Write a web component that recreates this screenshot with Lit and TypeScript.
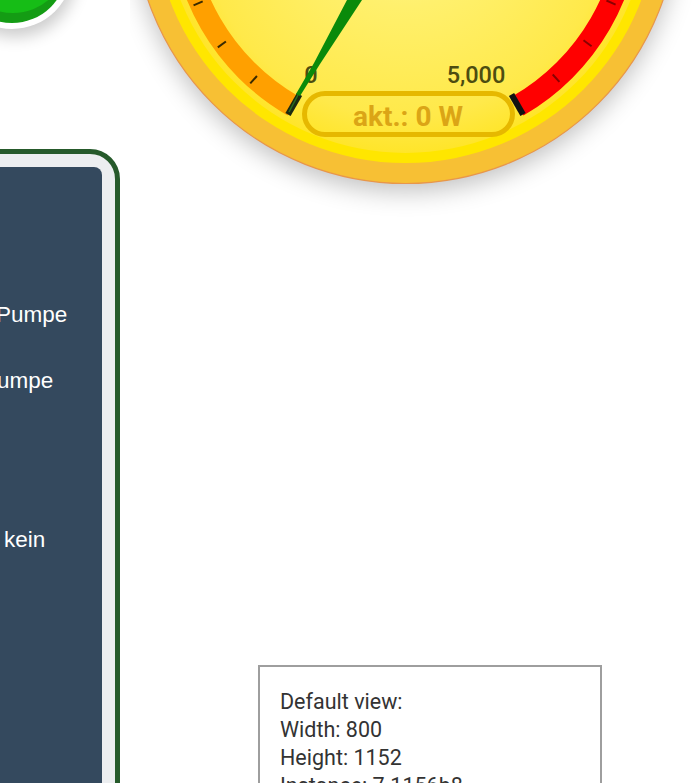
import { LitElement, html, css, svg } from "lit";
import { customElement } from "lit/decorators.js";

const CX = 405.5;
const CY = -89;

function polar(r: number, deg: number): [number, number] {
  // deg measured from straight down, positive to the left
  const a = (deg * Math.PI) / 180;
  return [CX - r * Math.sin(a), CY + r * Math.cos(a)];
}

function arc(r1: number, r2: number, from: number, to: number): string {
  const [ax, ay] = polar(r1, from);
  const [bx, by] = polar(r1, to);
  const [cx, cy] = polar(r2, to);
  const [dx, dy] = polar(r2, from);
  return `M${ax} ${ay}A${r1} ${r1} 0 0 1 ${bx} ${by}L${cx} ${cy}A${r2} ${r2} 0 0 0 ${dx} ${dy}Z`;
}

function tick(r1: number, r2: number, deg: number, w: number, color: string) {
  const [a, b] = polar(r1, deg);
  const [c, d] = polar(r2, deg);
  return svg`<line x1=${a} y1=${b} x2=${c} y2=${d} stroke=${color} stroke-width=${w} />`;
}

@customElement("app-root")
export class AppRoot extends LitElement {
  static styles = css`
    :host {
      display: flex;
      width: 696px;
      height: 783px;
      overflow: hidden;
      background: #fff;
      font-family: Roboto, "Liberation Sans", sans-serif;
    }
    .left {
      flex: 0 0 130px;
      display: flex;
      flex-direction: column;
    }
    .lamp {
      display: block;
      width: 130px;
      height: 149px;
      flex: none;
    }
    .frame {
      box-sizing: border-box;
      width: 240px;
      margin-left: -120px;
      height: 700px;
      flex: none;
      border: 5px solid #265a2b;
      border-radius: 30px;
      background: #eceef0;
      padding: 13px 13px 0 0;
    }
    .panel {
      height: 100%;
      box-sizing: border-box;
      background: #34495e;
      border-radius: 8px;
      color: #fff;
      font-family: "Liberation Sans", Arial, sans-serif;
      font-size: 22.5px;
      line-height: 26px;
      padding: 135px 0 0 114px;
      display: flex;
      flex-direction: column;
      align-items: flex-start;
    }
    .l1 { margin: 0 0 0 -3px; }
    .l2 { margin: 40px 0 0 -2px; }
    .l3 { margin: 133px 0 0 5px; }
    .right {
      flex: 1;
      display: flex;
      flex-direction: column;
      min-width: 0;
    }
    .gauge {
      display: block;
      width: 566px;
      height: 240px;
      flex: none;
    }
    .note {
      box-sizing: border-box;
      flex: none;
      margin: 425px 0 0 128px;
      width: 344px;
      height: 300px;
      border: 2px solid #9e9e9e;
      padding: 21px 20px 20px;
      color: #333;
      font-size: 21.5px;
      line-height: 28px;
    }
    svg text { font-family: Roboto, "Liberation Sans", sans-serif; }
  `;

  render() {
    return html`
      <div class="left">
        <svg class="lamp" viewBox="0 0 130 149">
          <defs>
            <filter id="ls" x="-40%" y="-40%" width="180%" height="180%">
              <feGaussianBlur stdDeviation="8" />
            </filter>
          </defs>
          <circle cx="15" cy="-24" r="61" fill="#000" opacity="0.2" filter="url(#ls)" />
          <circle cx="12" cy="-32" r="61" fill="#fff" />
          <circle cx="12" cy="-32" r="55" fill="#149c14" />
          <ellipse cx="13" cy="-40" rx="54" ry="53" fill="#16bd16" />
        </svg>
        <div class="frame">
          <div class="panel">
            <div class="l1">Pumpe</div>
            <div class="l2">umpe</div>
            <div class="l3">kein</div>
          </div>
        </div>
      </div>
      <div class="right">
        <svg class="gauge" viewBox="130 0 566 240">
          <defs>
            <radialGradient id="face" gradientUnits="userSpaceOnUse" cx=${CX} cy=${CY} r="242">
              <stop offset="0" stop-color="#fff59a" />
              <stop offset="0.4" stop-color="#fff06c" />
              <stop offset="0.85" stop-color="#ffe94a" />
              <stop offset="1" stop-color="#ffe52a" />
            </radialGradient>
            <filter id="gs" x="-20%" y="-20%" width="140%" height="140%">
              <feGaussianBlur stdDeviation="13" />
            </filter>
          </defs>
          <circle cx=${CX} cy=${CY + 8} r="272" fill="#000" opacity="0.25" filter="url(#gs)" />
          <circle cx=${CX} cy=${CY} r="272.5" fill="#f7c034" stroke="#e8964a" stroke-width="1.2" />
          <circle cx=${CX} cy=${CY} r="252" fill="#ffe600" />
          <circle cx=${CX} cy=${CY} r="242" fill="url(#face)" />
          <path d=${arc(236, 214, 30, 90)} fill="#ffa000" />
          <path d=${arc(236, 214, -90, -30)} fill="#ff0000" />
          ${[42, 54, 66].map((d) => tick(222, 232, d, 2, "#3a2a00"))}
          ${[-42, -54, -66].map((d) => tick(220, 230, d, 2, "#8a0000"))}
          ${tick(235, 212, 30, 6, "#1c2a10")}
          ${tick(235, 212, -30, 6, "#111")}
          <text x="311" y="83" font-size="23.5" font-weight="500" fill="#4d4d10" text-anchor="middle">0</text>
          <polygon points="347,0 362,0 320,64 300,96 296,94 314,63" fill="#0a8a0a" />
          <line x1="298" y1="95" x2="289" y2="112" stroke="#2f9a2f" stroke-width="1.5" opacity="0.6" />
          <text x="476" y="83" font-size="23.5" font-weight="500" fill="#4d4d10" text-anchor="middle">5,000</text>
          <rect x="304.5" y="93.5" width="208" height="41" rx="20.5" fill="none" stroke="#e6b800" stroke-width="5" />
          <text x="408" y="126" font-size="28" font-weight="700" fill="#dba516" text-anchor="middle">akt.: 0 W</text>
        </svg>
        <div class="note">Default view:<br />Width: 800<br />Height: 1152<br />Instance: 7.1156b8</div>
      </div>
    `;
  }
}
